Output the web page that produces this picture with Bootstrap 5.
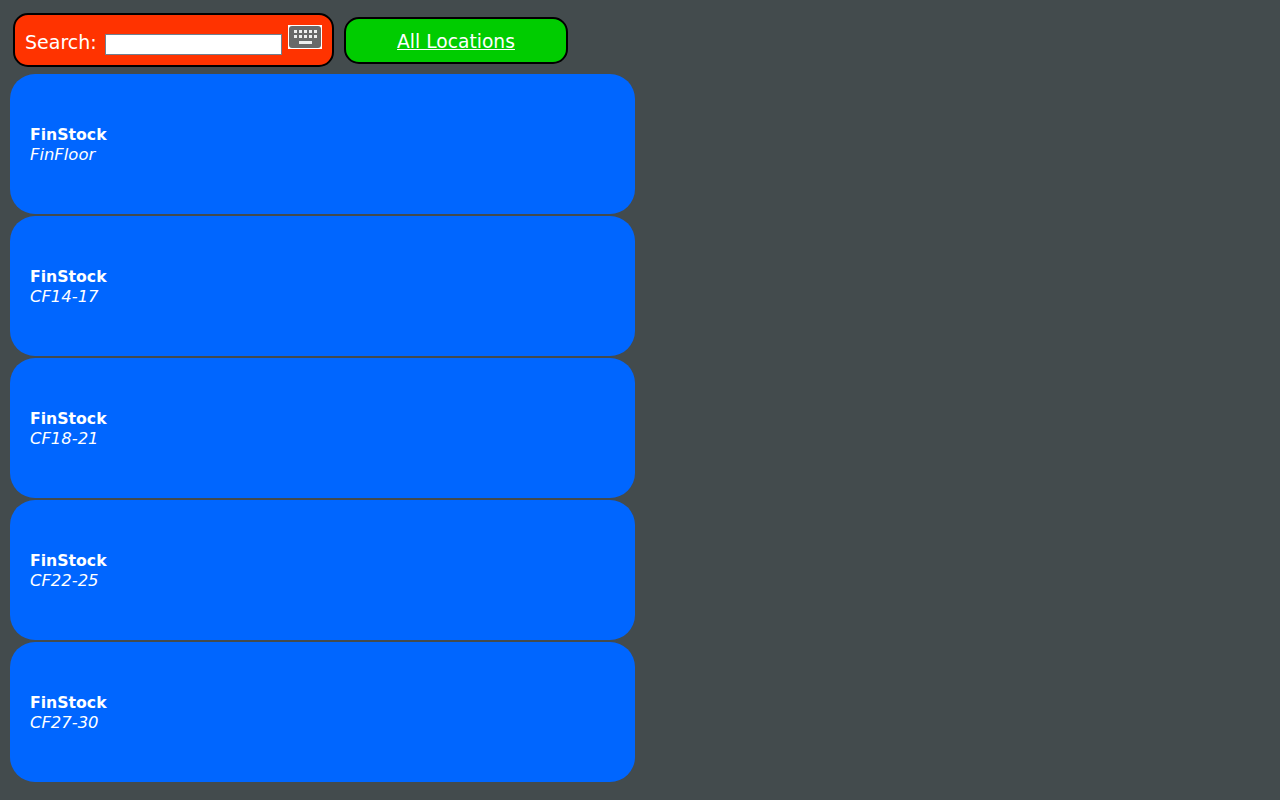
<!DOCTYPE html>
<html lang="en">
<head>
<meta charset="utf-8">
<title>Locations</title>
<link href="https://cdn.jsdelivr.net/npm/bootstrap@5.3.0/dist/css/bootstrap.min.css" rel="stylesheet">
<style>
html,body{height:100%}
body{background:#434b4d;font-family:"DejaVu Sans",Verdana,sans-serif;color:#fff;overflow:hidden}
.shell{padding:13px 0 0 10px;width:635px}
.topbar{height:54px;padding-left:3px;margin-bottom:7px;gap:10px}
.searchbox{width:321px;height:54px;background:#ff3300;border:2px solid #000;border-radius:15px;padding:0 10px}
.searchlabel{font-size:19px;line-height:1;margin-right:8px;margin-top:5px}
.searchinput{width:177px;height:21px;border:1px solid #708090;background:#fff;padding:0;margin-top:8px;border-radius:0;outline:0}
.kbd{width:34px;height:24px;margin-left:6px;margin-top:-6px;display:block}
.allbtn{width:224px;height:47px;background:#00cc00;border:2px solid #000;border-radius:15px;color:#fff;font-size:18.7px;padding-top:4px}
.allbtn:hover{color:#fff}
.stack{gap:2px}
.loc{height:140px;background:#0066ff;border-radius:25px;padding:2px 20px 0;color:#fff;text-decoration:none;font-size:16.4px;line-height:19px}
.loc b{font-size:15.7px;line-height:18px}
.loc i{margin-top:1px}
.loc:hover{color:#fff}
</style>
</head>
<body>
<div class="shell">
  <div class="topbar d-flex align-items-center">
    <div class="searchbox d-flex align-items-center flex-shrink-0">
      <label class="searchlabel" for="q">Search:</label>
      <input id="q" class="searchinput" type="text">
      <svg class="kbd" viewBox="0 0 34 24" aria-hidden="true">
        <rect width="34" height="24" fill="#fff"/>
        <rect x="1" y="1" width="32" height="22" rx="3" fill="#696969"/>
        <g fill="#eee">
          <rect x="6" y="5" width="3" height="3"/><rect x="11" y="5" width="3" height="3"/><rect x="16" y="5" width="3" height="3"/><rect x="21" y="5" width="3" height="3"/><rect x="26" y="5" width="3" height="3"/>
          <rect x="6" y="10" width="3" height="3"/><rect x="11" y="10" width="3" height="3"/><rect x="16" y="10" width="3" height="3"/><rect x="21" y="10" width="3" height="3"/><rect x="26" y="10" width="3" height="3"/>
          <rect x="11" y="16" width="13" height="3"/>
        </g>
      </svg>
    </div>
    <a class="allbtn d-flex align-items-center justify-content-center flex-shrink-0" href="#">All Locations</a>
  </div>
  <div class="stack d-flex flex-column">
    <a class="loc d-flex flex-column justify-content-center" href="#"><b>FinStock</b><i>FinFloor</i></a>
    <a class="loc d-flex flex-column justify-content-center" href="#"><b>FinStock</b><i>CF14-17</i></a>
    <a class="loc d-flex flex-column justify-content-center" href="#"><b>FinStock</b><i>CF18-21</i></a>
    <a class="loc d-flex flex-column justify-content-center" href="#"><b>FinStock</b><i>CF22-25</i></a>
    <a class="loc d-flex flex-column justify-content-center" href="#"><b>FinStock</b><i>CF27-30</i></a>
  </div>
</div>
<script src="https://cdn.jsdelivr.net/npm/bootstrap@5.3.0/dist/js/bootstrap.bundle.min.js"></script>
</body>
</html>
